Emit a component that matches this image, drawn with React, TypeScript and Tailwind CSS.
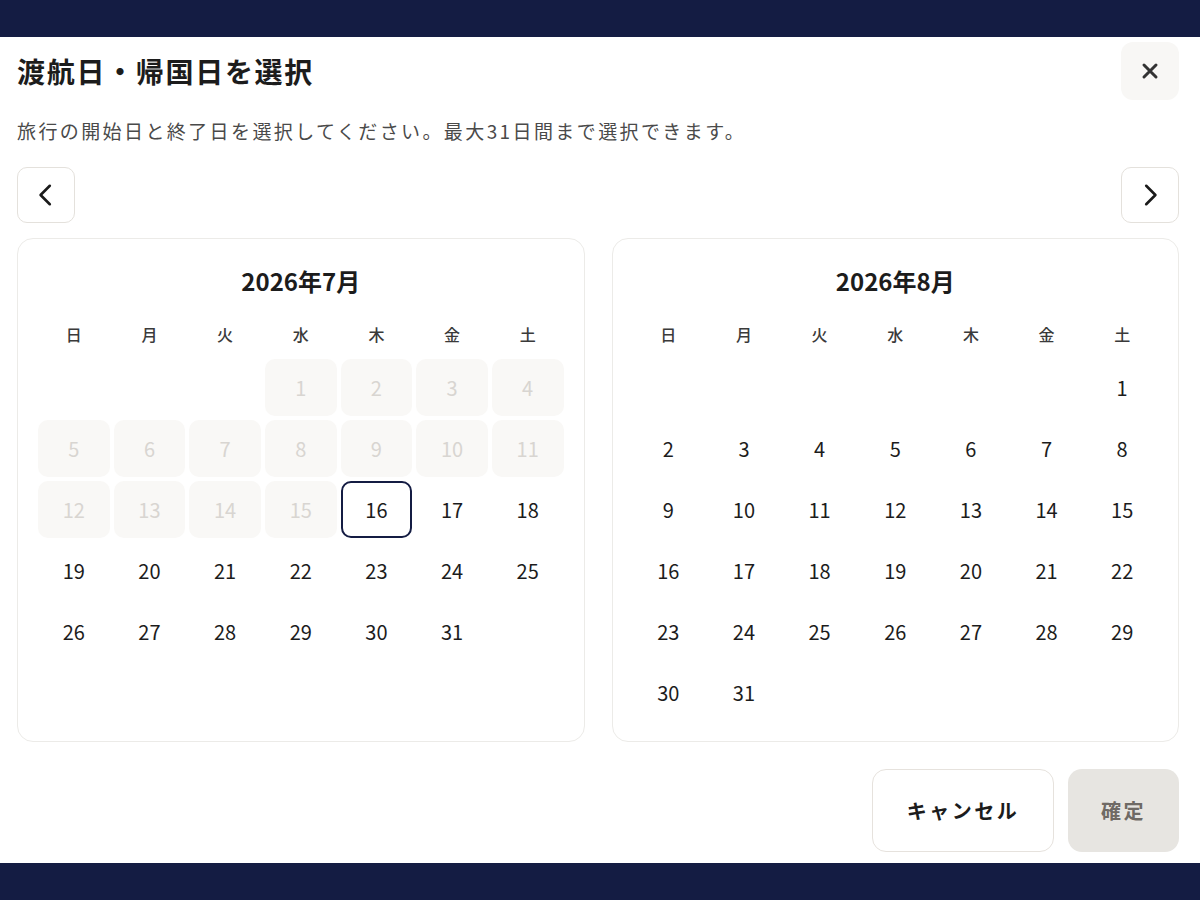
import { useState } from "react";

type Month = {
  label: string;
  offset: number; // weekday of the 1st (0 = Sunday)
  days: number;
  disabledBefore: number; // days before this number are not selectable
};

const MONTHS: Month[] = [
  { label: "2026年7月", offset: 3, days: 31, disabledBefore: 16 },
  { label: "2026年8月", offset: 6, days: 31, disabledBefore: 0 },
];

const WEEKDAYS = ["日", "月", "火", "水", "木", "金", "土"];

const font = { fontFamily: '"Noto Sans CJK JP", "Noto Sans", sans-serif' };

function Chevron({ dir }: { dir: "left" | "right" }) {
  return (
    <svg width="26" height="26" viewBox="0 0 24 24" fill="none" stroke="#1a1a1a" strokeWidth="2.4" strokeLinecap="round" strokeLinejoin="round">
      {dir === "left" ? <path d="M15.5 3.5L7 12l8.5 8.5" /> : <path d="M8.5 3.5L17 12l-8.5 8.5" />}
    </svg>
  );
}

function MonthCard({ month, selected, onSelect }: { month: Month; selected: string | null; onSelect: (key: string) => void }) {
  const cells: (number | null)[] = [];
  for (let i = 0; i < month.offset; i++) cells.push(null);
  for (let d = 1; d <= month.days; d++) cells.push(d);

  return (
    <div className="rounded-2xl border border-[#ecebe8] bg-white px-5 pt-[26px] pb-[20px]">
      <div className="h-8 text-center text-[24px] font-bold leading-8 text-[#1c1c1c]">{month.label}</div>

      <div className="mt-[23px] grid h-7 grid-cols-7 gap-x-1">
        {WEEKDAYS.map((w) => (
          <div key={w} className="text-center text-[16px] font-medium leading-7 text-[#3a3a3a]">
            {w}
          </div>
        ))}
      </div>

      <div className="mt-[11px] grid grid-cols-7 gap-1">
        {cells.map((d, i) => {
          if (d === null) return <div key={`e${i}`} className="h-[57px]" />;
          const key = `${month.label}-${d}`;
          const disabled = d < month.disabledBefore;
          const isSel = selected === key;
          if (disabled) {
            return (
              <div key={key} className="flex h-[57px] items-center justify-center rounded-[10px] bg-[#f9f8f6] text-[20px] text-[#d8d5d1]">
                {d}
              </div>
            );
          }
          return (
            <button
              key={key}
              onClick={() => onSelect(key)}
              className={
                isSel
                  ? "flex h-[57px] items-center justify-center rounded-[10px] border-2 border-[#141c43] bg-white text-[20px] text-[#1c1c1c]"
                  : "flex h-[57px] items-center justify-center rounded-[10px] text-[20px] text-[#1c1c1c] hover:bg-[#f6f5f3]"
              }
            >
              {d}
            </button>
          );
        })}
      </div>
    </div>
  );
}

export default function App() {
  const [selected, setSelected] = useState<string | null>("2026年7月-16");

  return (
    <div className="flex min-h-[900px] flex-col bg-white" style={font}>
      <div className="h-[37px] bg-[#141c43]" />

      <div className="flex-1 pl-[17px] pr-[21px] pt-[5px] pb-[11px]">
        <div className="flex items-center justify-between">
          <h1 className="text-[28px] font-bold tracking-[1.7px] text-[#1c1c1c]">渡航日・帰国日を選択</h1>
          <button className="flex h-[58px] w-[58px] items-center justify-center rounded-xl bg-[#f8f7f5]" aria-label="閉じる">
            <svg width="18" height="18" viewBox="0 0 18 18" stroke="#333" strokeWidth="3" strokeLinecap="round">
              <path d="M3 3l12 12M15 3L3 15" />
            </svg>
          </button>
        </div>

        <p className="mt-[17px] text-[19px] leading-7 tracking-[2.4px] text-[#4a4a4a]">
          旅行の開始日と終了日を選択してください。最大31日間まで選択できます。
        </p>

        <div className="mt-[22px] flex justify-between">
          <button className="flex h-14 w-[58px] items-center justify-center rounded-[10px] border border-[#e4e1dc] bg-white" aria-label="前の月">
            <Chevron dir="left" />
          </button>
          <button className="flex h-14 w-[58px] items-center justify-center rounded-[10px] border border-[#e4e1dc] bg-white" aria-label="次の月">
            <Chevron dir="right" />
          </button>
        </div>

        <div className="mt-[15px] grid grid-cols-2 gap-[27px]">
          {MONTHS.map((m) => (
            <MonthCard key={m.label} month={m} selected={selected} onSelect={setSelected} />
          ))}
        </div>

        <div className="mt-[27px] flex justify-end gap-[14px]">
          <button className="h-[83px] w-[182px] rounded-[14px] border border-[#e6e2dd] bg-white text-[20px] font-bold tracking-[2.5px] text-[#1c1c1c]">
            キャンセル
          </button>
          <button disabled className="h-[83px] w-[111px] rounded-[14px] bg-[#e7e5e1] text-[20px] font-bold tracking-[2.5px] text-[#6f6a65]">
            確定
          </button>
        </div>
      </div>

      <div className="h-[37px] bg-[#141c43]" />
    </div>
  );
}
